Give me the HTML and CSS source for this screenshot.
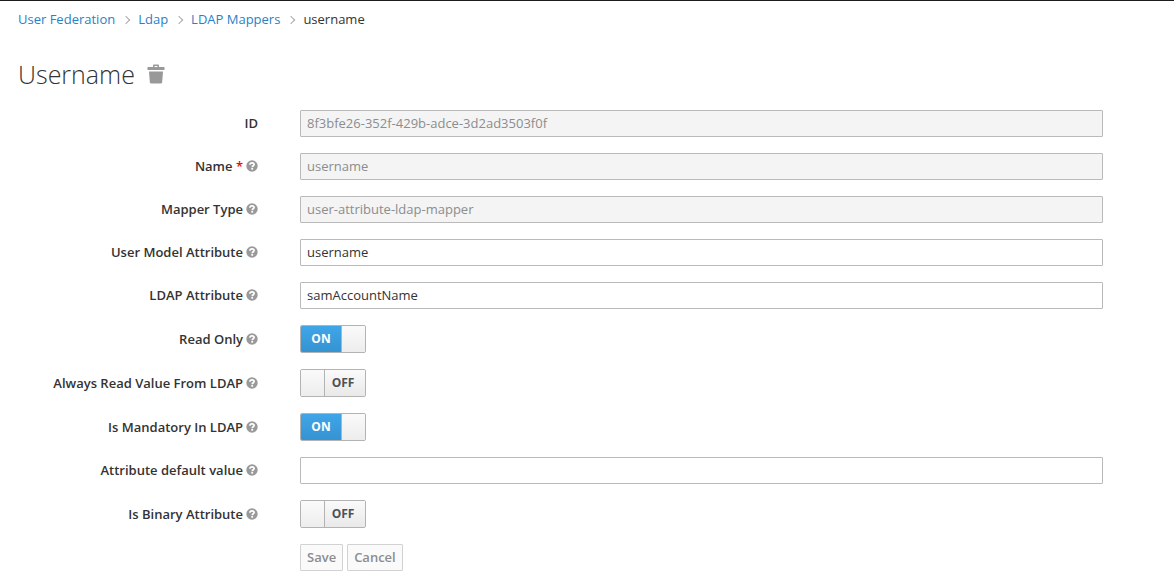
FILE: index.html
```html
<!DOCTYPE html>
<html lang="en">
<head>
<meta charset="utf-8">
<meta name="viewport" content="width=device-width, initial-scale=1">
<title>Username - LDAP Mappers</title>
<link rel="stylesheet" href="styles.css">
</head>
<body>
<svg class="defs" aria-hidden="true">
  <symbol id="help" viewBox="0 0 12 12">
    <circle cx="6" cy="6" r="5.7" fill="#999"/>
    <path d="M3.900 4.700C4 3.300 4.900 2.800 6 2.800c1.200 0 2.100.6 2.100 1.700C8.100 5.800 6.200 5.700 6.200 7.200" fill="none" stroke="#fff" stroke-width="1.700"/>
    <rect x="5.300" y="8" width="1.800" height="1.700" fill="#fff"/>
  </symbol>
</svg>
<main class="page">
  <nav aria-label="Breadcrumb">
    <ol class="breadcrumb">
      <li><a href="#">User Federation</a></li>
      <li><a href="#">Ldap</a></li>
      <li><a href="#">LDAP Mappers</a></li>
      <li>username</li>
    </ol>
  </nav>
  <header class="heading">
    <h1>Username</h1>
    <button class="delete" type="button" aria-label="Delete mapper">
      <svg viewBox="0 0 18 20" width="18" height="20" aria-hidden="true">
        <path d="M6 3V1.500Q6 .5 7 .5h4q1 0 1 1V3h5q.5 0 .5.500V6H.5V3.500Q.5 3 1 3zM7.500 3h3V2h-3zM2 7.500h14L15.200 18q-.1 1.500-1.500 1.500H4.300Q2.900 19.500 2.800 18z" fill="#999"/>
      </svg>
    </button>
  </header>
  <form class="form">
    <div class="row">
      <div class="caption"><label for="id">ID</label></div>
      <input class="text" id="id" type="text" value="8f3bfe26-352f-429b-adce-3d2ad3503f0f" disabled>
    </div>
    <div class="row">
      <div class="caption"><label for="name">Name <span class="required">*</span></label><svg class="help"><use href="#help"/></svg></div>
      <input class="text" id="name" type="text" value="username" disabled>
    </div>
    <div class="row">
      <div class="caption"><label for="type">Mapper Type</label><svg class="help"><use href="#help"/></svg></div>
      <input class="text" id="type" type="text" value="user-attribute-ldap-mapper" disabled>
    </div>
    <div class="row">
      <div class="caption"><label for="model">User Model Attribute</label><svg class="help"><use href="#help"/></svg></div>
      <input class="text" id="model" type="text" value="username">
    </div>
    <div class="row">
      <div class="caption"><label for="ldap">LDAP Attribute</label><svg class="help"><use href="#help"/></svg></div>
      <input class="text" id="ldap" type="text" value="samAccountName">
    </div>
    <div class="row">
      <div class="caption"><label for="readonly">Read Only</label><svg class="help"><use href="#help"/></svg></div>
      <label class="switch"><input id="readonly" type="checkbox" checked><span class="on">ON</span><span class="handle"></span><span class="off">OFF</span></label>
    </div>
    <div class="row">
      <div class="caption"><label for="always">Always Read Value From LDAP</label><svg class="help"><use href="#help"/></svg></div>
      <label class="switch"><input id="always" type="checkbox"><span class="on">ON</span><span class="handle"></span><span class="off">OFF</span></label>
    </div>
    <div class="row">
      <div class="caption"><label for="mandatory">Is Mandatory In LDAP</label><svg class="help"><use href="#help"/></svg></div>
      <label class="switch"><input id="mandatory" type="checkbox" checked><span class="on">ON</span><span class="handle"></span><span class="off">OFF</span></label>
    </div>
    <div class="row">
      <div class="caption"><label for="default">Attribute default value</label><svg class="help"><use href="#help"/></svg></div>
      <input class="text" id="default" type="text">
    </div>
    <div class="row">
      <div class="caption"><label for="binary">Is Binary Attribute</label><svg class="help"><use href="#help"/></svg></div>
      <label class="switch"><input id="binary" type="checkbox"><span class="on">ON</span><span class="handle"></span><span class="off">OFF</span></label>
    </div>
    <div class="row">
      <div class="actions">
        <button class="button" type="submit" disabled>Save</button>
        <button class="button" type="button" disabled>Cancel</button>
      </div>
    </div>
  </form>
</main>
</body>
</html>
```

FILE: styles.css
```css
* { box-sizing: border-box; }

body {
  margin: 0;
  border-top: 1px solid #1d1d1d;
  background: #fff;
  color: #333;
  font: 13px/18px "Open Sans", sans-serif;
}

.defs { display: none; }

.page { padding: 9px 18px 16px; }

.breadcrumb {
  display: flex;
  margin: 0;
  padding: 0;
  list-style: none;
}

.breadcrumb li { display: flex; align-items: center; }

.breadcrumb li + li::before {
  content: "";
  width: 5px;
  height: 5px;
  margin: 2px 9px 0 8px;
  border: solid #aaa;
  border-width: 1px 1px 0 0;
  transform: rotate(45deg);
}

.breadcrumb a { color: #2a7fc8; text-decoration: none; }

.heading {
  display: flex;
  align-items: center;
  gap: 12px;
  margin: 29px 0 19px;
}

h1 {
  margin: 0;
  font-size: 25px;
  font-weight: 300;
  line-height: 34px;
}

.delete {
  display: flex;
  padding: 0;
  border: 0;
  background: none;
}

.form { display: grid; gap: 16px; }

.row {
  display: grid;
  grid-template-columns: 240px 1fr;
  column-gap: 42px;
  align-items: center;
  padding-right: 53px;
}

.caption {
  display: flex;
  align-items: center;
  justify-content: flex-end;
  gap: 3px;
  padding-bottom: 1px;
  font-weight: 600;
}

.required { color: #f00; }

.help { width: 12px; height: 12px; }

.text {
  width: 100%;
  height: 27px;
  padding: 0 6px 1px;
  border: 1px solid #bababa;
  border-radius: 1px;
  background: #fff;
  color: #333;
  font: inherit;
}

.text:disabled { background: #f4f4f4; color: #8b8d8f; }

.switch {
  display: flex;
  justify-self: start;
  width: 66px;
  height: 28px;
  border: 1px solid #b3b3b3;
  border-radius: 2px;
  overflow: hidden;
  font-size: 12px;
  font-weight: 700;
  line-height: 26px;
  text-align: center;
}

.switch input { position: absolute; opacity: 0; }

.handle {
  width: 23px;
  background: linear-gradient(#fafafa, #ededed);
}

.on, .off { flex: 1; }

.on {
  display: none;
  background: linear-gradient(#3fa6e8, #3593d1);
  color: #fff;
}

.off {
  padding-right: 4px;
  border-left: 1px solid #b3b3b3;
  background: linear-gradient(#fafafa, #e9e9e9);
  color: #4d5258;
}

.switch input:checked ~ .on { display: block; }
.switch input:checked ~ .off { display: none; }
.switch input:checked ~ .handle { width: 24px; border-left: 1px solid #b3b3b3; }

.actions {
  display: flex;
  grid-column: 2;
  gap: 4px;
}

.button {
  height: 27px;
  padding: 0 6px 2px;
  border: 1px solid #d2d2d2;
  border-radius: 1px;
  background: #fafafa;
  color: #8b8d8f;
  font: inherit;
  font-weight: 600;
}
```
